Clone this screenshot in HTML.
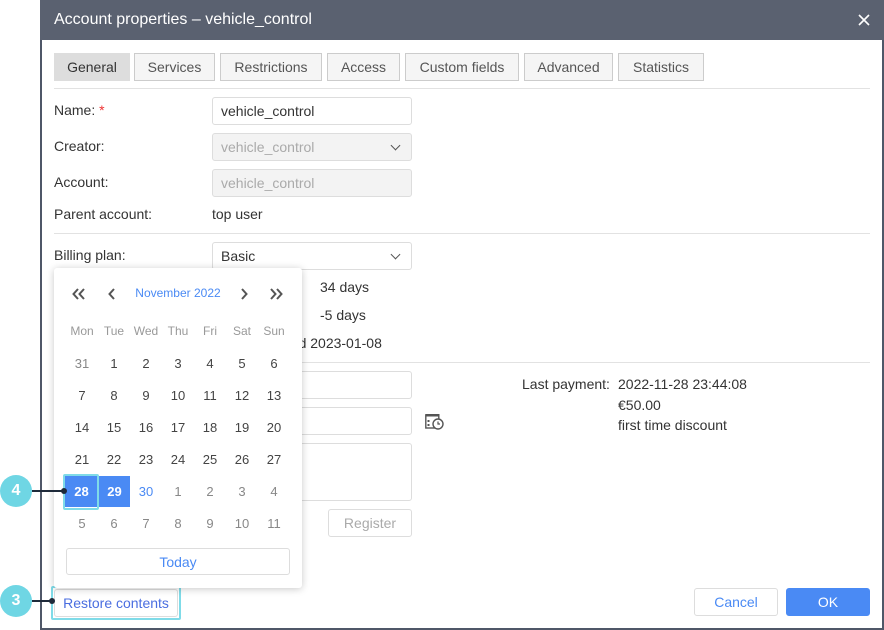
<!DOCTYPE html>
<html><head><style>
*{box-sizing:border-box;margin:0;padding:0}
body{width:884px;height:630px;background:#fff;font-family:"Liberation Sans",sans-serif;font-size:14px;color:#333;position:relative;overflow:hidden}
.a{position:absolute}
.dlg{left:40px;top:0;width:844px;height:630px;border:2px solid #4f5768;border-top:none;background:#fff}
.hdr{left:40px;top:0;width:844px;height:40px;background:#5a6170;color:#fff;font-size:16px;line-height:40px;padding-left:14px}
.tab{top:53px;height:28px;border:1px solid #ccc;background:#f5f5f5;color:#555;line-height:26px;text-align:center;font-size:14px}
.hr{height:1px;background:#e2e2e2;left:54px;width:816px}
.lbl{left:54px;font-size:14px;color:#333}
.inp{height:28px;border:1px solid #ddd;border-radius:3px;background:#fff;padding-left:8px;line-height:26px}
.dis{background:#f3f3f3;color:#aaa}
.chev{position:absolute;right:12px;top:8px;width:7px;height:7px;border-right:1.6px solid #555;border-bottom:1.6px solid #555;transform:rotate(45deg)}
.cal{left:54px;top:268px;width:248px;height:320px;background:#fff;box-shadow:0 1px 8px rgba(0,0,0,.22);border-radius:3px}
.d{position:absolute;width:32px;text-align:center;font-size:13px;color:#444}
.dh{color:#999;font-size:12px}
.g{color:#888}
.btn{border:1px solid #ddd;border-radius:3px;background:#fff;text-align:center;height:28px;line-height:26px}
.circ{width:32px;height:32px;border-radius:50%;background:#6fd6e4;color:#fff;font-weight:bold;font-size:16px;text-align:center;line-height:32px;left:0}
</style></head><body>
<div class="a dlg"></div>
<div class="a hdr">Account properties – vehicle_control</div>
<svg class="a" style="left:858px;top:14px" width="12" height="12" viewBox="0 0 12 12"><path d="M1 1L11 11M11 1L1 11" stroke="#fff" stroke-width="1.6"/></svg>

<div class="a tab" style="left:54px;width:76px;background:#ddd;border-color:#ddd;color:#333">General</div>
<div class="a tab" style="left:134px;width:81px">Services</div>
<div class="a tab" style="left:220px;width:102px">Restrictions</div>
<div class="a tab" style="left:327px;width:73px">Access</div>
<div class="a tab" style="left:405px;width:114px">Custom fields</div>
<div class="a tab" style="left:524px;width:89px">Advanced</div>
<div class="a tab" style="left:618px;width:86px">Statistics</div>
<div class="a hr" style="top:88px"></div>

<div class="a lbl" style="top:102px">Name: <span style="color:#e33">*</span></div>
<div class="a inp" style="left:212px;top:97px;width:200px">vehicle_control</div>
<div class="a lbl" style="top:138px">Creator:</div>
<div class="a inp dis" style="left:212px;top:133px;width:200px">vehicle_control<span class="chev"></span></div>
<div class="a lbl" style="top:174px">Account:</div>
<div class="a inp dis" style="left:212px;top:169px;width:200px">vehicle_control</div>
<div class="a lbl" style="top:206px">Parent account:</div>
<div class="a" style="left:212px;top:206px">top user</div>
<div class="a hr" style="top:233px"></div>
<div class="a lbl" style="top:247px">Billing plan:</div>
<div class="a inp" style="left:212px;top:242px;width:200px">Basic<span class="chev"></span></div>
<div class="a" style="left:320px;top:279px">34 days</div>
<div class="a" style="left:320px;top:307px">-5 days</div>
<div class="a" style="left:276px;top:335px">used 2023-01-08</div>
<div class="a hr" style="top:362px"></div>
<div class="a inp" style="left:212px;top:371px;width:200px"></div>
<div class="a inp" style="left:212px;top:407px;width:200px"></div>
<div class="a inp" style="left:212px;top:443px;width:200px;height:58px"></div>
<div class="a btn" style="left:328px;top:509px;width:84px;color:#aaa">Register</div>
<svg class="a" style="left:425px;top:413px" width="20" height="18" viewBox="0 0 20 18"><rect x="0.5" y="1" width="14" height="2.5" fill="#555"/><rect x="0.8" y="2" width="13" height="13" fill="none" stroke="#555" stroke-width="1.4"/><rect x="2.5" y="7" width="2" height="2" fill="#555"/><rect x="2.5" y="11" width="2" height="2" fill="#555"/><circle cx="13" cy="11" r="5" fill="#fff" stroke="#555" stroke-width="1.4"/><path d="M13 8.5V11h2" stroke="#555" fill="none" stroke-width="1.2"/></svg>

<div class="a" style="left:522px;top:376px">Last payment:</div>
<div class="a" style="left:618px;top:376px">2022-11-28 23:44:08</div>
<div class="a" style="left:618px;top:397px">€50.00</div>
<div class="a" style="left:618px;top:417px">first time discount</div>

<div class="a btn" style="left:694px;top:588px;width:84px;color:#4a8af4">Cancel</div>
<div class="a btn" style="left:786px;top:588px;width:84px;background:#4a8af4;border-color:#4a8af4;color:#fff">OK</div>

<div class="a" style="left:51px;top:586px;width:130px;height:34px;border:2px solid #7fdbe8;border-radius:2px"></div>
<div class="a btn" style="left:54px;top:589px;width:124px;color:#4a6ee0">Restore contents</div>

<div class="a cal">
 <svg class="a" style="left:18px;top:20px" width="14" height="12" viewBox="0 0 14 12"><path d="M6 1L1.5 6L6 11M12 1L7.5 6L12 11" stroke="#555" stroke-width="2" fill="none"/></svg>
 <svg class="a" style="left:54px;top:20px" width="8" height="12" viewBox="0 0 8 12"><path d="M6 1L1.5 6L6 11" stroke="#555" stroke-width="2" fill="none"/></svg>
 <div class="a" style="left:0;width:248px;text-align:center;top:18px;font-size:12px;color:#4a8af4">November 2022</div>
 <svg class="a" style="left:186px;top:20px" width="8" height="12" viewBox="0 0 8 12"><path d="M2 1L6.5 6L2 11" stroke="#555" stroke-width="2" fill="none"/></svg>
 <svg class="a" style="left:215px;top:20px" width="14" height="12" viewBox="0 0 14 12"><path d="M2 1L6.5 6L2 11M8 1L12.5 6L8 11" stroke="#555" stroke-width="2" fill="none"/></svg>
</div>
<div id="days"></div>
<script>
var cols=[82,114,146,178,210,242,274],h='';
var hd=['Mon','Tue','Wed','Thu','Fri','Sat','Sun'];
hd.forEach(function(t,i){h+='<div class="d dh" style="left:'+(cols[i]-16)+'px;top:324px">'+t+'</div>'});
var rows=[[31,1,2,3,4,5,6],[7,8,9,10,11,12,13],[14,15,16,17,18,19,20],[21,22,23,24,25,26,27],[28,29,30,1,2,3,4],[5,6,7,8,9,10,11]];
rows.forEach(function(r,ri){var y=356+ri*32;r.forEach(function(n,ci){var st='',c='d';
 if(ri==0&&ci==0||ri==4&&ci>2||ri==5)c+=' g';
 if(ri==4&&ci<2){st='background:#4a8af4;color:#fff;font-weight:bold;height:31px;line-height:31px;top:'+(y-8)+'px;width:'+(ci==0?33:31)+'px;left:'+(ci==0?65:99)+'px'}
 else if(ri==4&&ci==2){st='color:#4a8af4;left:'+(cols[ci]-16)+'px;top:'+y+'px'}
 else st='left:'+(cols[ci]-16)+'px;top:'+y+'px';
 h+='<div class="'+c+'" style="'+st+'">'+n+'</div>'})});
h+='<div class="a" style="left:63px;top:474px;width:36px;height:36px;border:2px solid #7fdbe8;border-radius:2px"></div>';
h+='<div class="a btn" style="left:66px;top:548px;width:224px;height:27px;color:#4a8af4">Today</div>';
document.getElementById('days').innerHTML=h;
</script>

<div class="a circ" style="top:475px">4</div>
<div class="a" style="left:32px;top:490px;width:33px;height:2px;background:#1e2a3a"></div>
<div class="a" style="left:61px;top:488px;width:6px;height:6px;border-radius:50%;background:#1e2a3a"></div>
<div class="a circ" style="top:585px">3</div>
<div class="a" style="left:32px;top:600px;width:20px;height:2px;background:#1e2a3a"></div>
<div class="a" style="left:49px;top:598px;width:6px;height:6px;border-radius:50%;background:#1e2a3a"></div>
</body></html>
